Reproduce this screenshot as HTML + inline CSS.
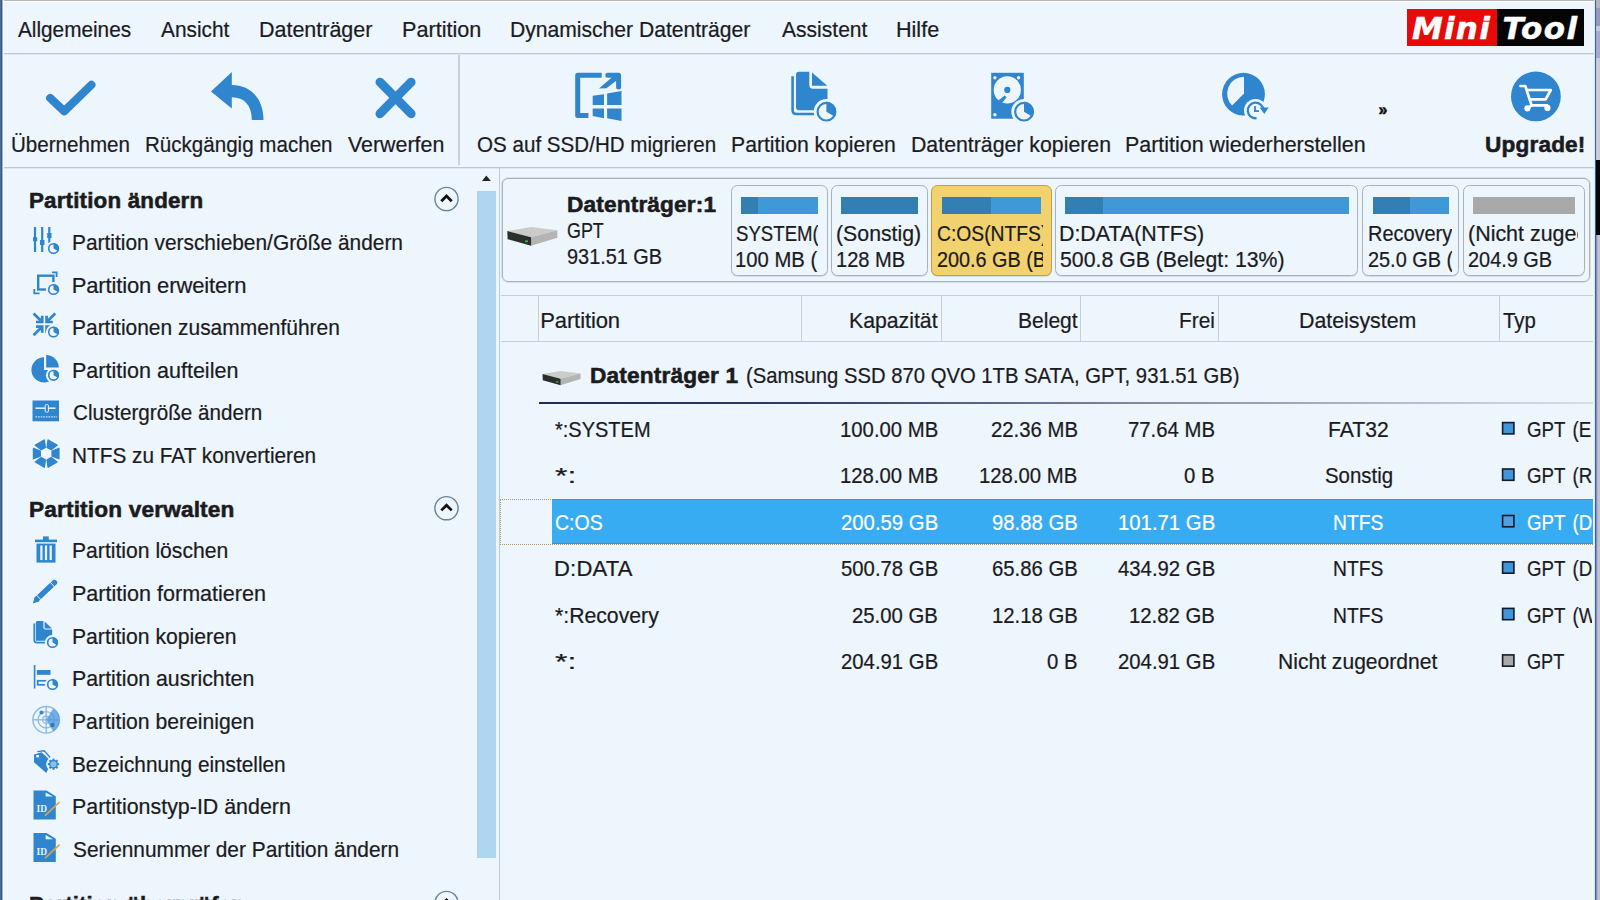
<!DOCTYPE html>
<html lang="de">
<head>
<meta charset="utf-8">
<title>MiniTool Partition Wizard</title>
<style>
html,body{margin:0;padding:0;}
body{width:1600px;height:900px;overflow:hidden;background:#edf5fd;position:relative;
  font-family:"Liberation Sans",sans-serif;font-size:22px;color:#1b1b1d;}
*{box-sizing:border-box;}
.abs{position:absolute;}
.t{position:absolute;white-space:pre;line-height:24px;height:24px;transform-origin:0 50%;-webkit-text-stroke:0.22px currentColor;}
.b{font-weight:bold;-webkit-text-stroke:0.55px currentColor;}
svg{position:absolute;left:0;top:0;overflow:visible;}
/* window chrome */
#edgeT{left:0;top:0;width:1600px;height:3px;background:linear-gradient(#b7b8ba 0 1px,#dfe3e8 1px 1.4px,#fbfdff 1.4px 2.4px,#f3f9fe 2.4px 3px);}
#edgeL{left:0;top:0;width:4px;height:900px;background:linear-gradient(90deg,#566c98 0 1px,#38537d 1px 2px,#9dbacf 2px 3px,#eefcff 3px 4px);}
#edgeR{left:1594px;top:0;width:6px;height:900px;background:linear-gradient(90deg,#d6ecfa 0 1px,#445f7e 1px 2px,#8690b6 2px 3px,#adb3d6 3px 4px,#c1c1d2 4px 6px);}
#edgeRb{left:1596px;top:0;width:4px;height:235px;background:linear-gradient(#b3b4bd 0 8px,#9398c1 8px 26px,#c4c7db 26px 31px,#a6aad0 31px 58px,#c9cbdc 58px 160px,#05070f 160px 235px);}
/* menu + toolbar */
#menu{left:0;top:0;width:1595px;height:54px;border-bottom:1px solid #bcc8d7;box-shadow:0 1px 0 #dfe8f2;}
#tool{left:0;top:54px;width:1595px;height:114px;border-bottom:1px solid #bcc8d7;box-shadow:0 1px 0 #dfe8f2;}
#tsep{left:458.4px;top:1px;width:1.3px;height:110px;background:#c6d2e0;}
#logo{left:1407px;top:8.7px;width:177px;height:37.2px;background:#050505;overflow:hidden;}
#logo i{position:absolute;top:0;height:37.2px;font:italic bold 31px/38.4px "DejaVu Sans","Liberation Sans",sans-serif;color:#fff;-webkit-text-stroke:0.5px #fff;}
#logo .r{left:0;width:90px;background:#e60a0a;}
/* left panel */
#left{left:0;top:168px;width:500px;height:732px;border-right:1.3px solid #c1c9d8;}
#thumb{left:477.3px;top:22.8px;width:18.3px;height:667.3px;background:#afd6f1;}
/* right */
#right{left:500px;top:168px;width:1095px;height:732px;}
#diskbox{left:502px;top:178px;width:1087.6px;height:103.6px;border:1px solid #aab2bf;border-radius:6px;box-shadow:0 0 0 0.5px #c3c9d3;}
.blk{position:absolute;top:185.4px;height:90.6px;border:1px solid #a9b1be;border-radius:6.5px;box-shadow:0 0.6px 0 rgba(150,160,178,.55);}
.blk.sel{background:#f1d26f;border-color:#c39f3e;}
.bar{position:absolute;top:10.8px;height:17.2px;background:#3f99d7;}
.used{height:100%;background:#337fb1;}
.clip{position:absolute;left:0;top:0;height:88px;overflow:hidden;}
#thead{left:500.5px;top:295px;width:1092px;height:47.3px;border-top:1.3px solid #c3cfde;border-bottom:1.3px solid #c3cfde;}
.vs{position:absolute;top:0;width:1.3px;height:45px;background:#c3cfde;}
#uline{left:539px;top:402.3px;width:1054px;height:1.3px;background:linear-gradient(90deg,#1f2a5a 0,#2f3a6a 25%,#8790ae 60%,#d9dfea 100%);}
#selrow{left:551.5px;top:499px;width:1041.5px;height:45.3px;background:#37acf3;border-top:1.2px solid #5e8aa6;border-bottom:1.2px solid #5e8aa6;}
#focus{left:500px;top:498.6px;width:1093px;height:46px;border:1.2px dotted #b8965a;}
#typclip{left:1520px;top:400px;width:72.4px;height:300px;overflow:hidden;word-spacing:2.5px;}
</style>
</head>
<body>
<div id="menu" class="abs">
<span class="t" style="left:17.91px;top:17.50px;transform:scaleX(0.9433)">Allgemeines</span>
<span class="t" style="left:160.91px;top:17.50px;transform:scaleX(0.9483)">Ansicht</span>
<span class="t" style="left:258.99px;top:17.50px;transform:scaleX(0.9762)">Datenträger</span>
<span class="t" style="left:402.23px;top:17.50px;transform:scaleX(0.9829)">Partition</span>
<span class="t" style="left:510.27px;top:17.50px;transform:scaleX(0.9588)">Dynamischer Datenträger</span>
<span class="t" style="left:781.91px;top:17.50px;transform:scaleX(0.9567)">Assistent</span>
<span class="t" style="left:896.48px;top:17.50px;transform:scaleX(0.9804)">Hilfe</span>
<div id="logo" class="abs"><i class="r"><span style="position:absolute;left:5px;letter-spacing:1.2px">Mini</span></i><i style="left:95.5px;letter-spacing:1.4px">Tool</i></div>
</div>
<div id="tool" class="abs">
<span class="t" style="left:10.60px;top:78.50px;transform:scaleX(0.9355)">Übernehmen</span>
<span class="t" style="left:144.55px;top:78.50px;transform:scaleX(0.9349)">Rückgängig machen</span>
<span class="t" style="left:347.87px;top:78.50px;transform:scaleX(0.9721)">Verwerfen</span>
<span class="t" style="left:477.35px;top:78.50px;transform:scaleX(0.9360)">OS auf SSD/HD migrieren</span>
<span class="t" style="left:731.01px;top:78.50px;transform:scaleX(0.9630)">Partition kopieren</span>
<span class="t" style="left:911.00px;top:78.50px;transform:scaleX(0.9677)">Datenträger kopieren</span>
<span class="t" style="left:1125.49px;top:78.50px;transform:scaleX(0.9742)">Partition wiederherstellen</span>
<span class="t b" style="left:1485.14px;top:78.50px;letter-spacing:0.15px;transform:scaleX(1.0283)">Upgrade!</span>
<span class="t b" style="left:1378.5px;top:44px;font-size:16px;color:#111">»</span>
<div id="tsep" class="abs"></div>
</div>
<div id="left" class="abs">
<span class="t b" style="left:29.03px;top:21.00px;letter-spacing:0.15px;transform:scaleX(1.0190)">Partition ändern</span>
<span class="t" style="left:71.78px;top:62.90px;transform:scaleX(0.9497)">Partition verschieben/Größe ändern</span>
<span class="t" style="left:71.70px;top:105.50px;letter-spacing:-0.14px">Partition erweitern</span>
<span class="t" style="left:71.77px;top:148.10px;transform:scaleX(0.9525)">Partitionen zusammenführen</span>
<span class="t" style="left:71.73px;top:190.70px;transform:scaleX(0.9787)">Partition aufteilen</span>
<span class="t" style="left:72.58px;top:233.30px;transform:scaleX(0.9379)">Clustergröße ändern</span>
<span class="t" style="left:71.79px;top:275.90px;transform:scaleX(0.9448)">NTFS zu FAT konvertieren</span>
<span class="t b" style="left:29.02px;top:329.80px;letter-spacing:0.15px;transform:scaleX(1.0293)">Partition verwalten</span>
<span class="t" style="left:71.76px;top:371.30px;transform:scaleX(0.9604)">Partition löschen</span>
<span class="t" style="left:71.73px;top:413.95px;transform:scaleX(0.9792)">Partition formatieren</span>
<span class="t" style="left:71.76px;top:456.60px;transform:scaleX(0.9615)">Partition kopieren</span>
<span class="t" style="left:71.75px;top:499.25px;transform:scaleX(0.9677)">Partition ausrichten</span>
<span class="t" style="left:71.76px;top:541.90px;transform:scaleX(0.9618)">Partition bereinigen</span>
<span class="t" style="left:71.79px;top:584.55px;transform:scaleX(0.9442)">Bezeichnung einstellen</span>
<span class="t" style="left:71.74px;top:627.20px;transform:scaleX(0.9727)">Partitionstyp-ID ändern</span>
<span class="t" style="left:72.57px;top:669.85px;transform:scaleX(0.9491)">Seriennummer der Partition ändern</span>
<span class="t b" style="left:29.05px;top:725.30px;letter-spacing:0.15px;transform:scaleX(1.0063)">Partition überprüfen</span>
<div id="thumb" class="abs"></div>
</div>
<div id="diskbox" class="abs"></div>
<div class="blk" style="left:730.5px;width:97.1px"><div class="bar" style="left:9.3px;width:77.0px"><div class="used" style="width:17.5px"></div></div><div class="clip" style="width:86.5px"><span class="t" style="left:4.29px;top:35.40px;transform:scaleX(0.8468)">SYSTEM(FAT32)</span>
<span class="t" style="left:3.55px;top:61.50px;transform:scaleX(0.9211)">100 MB (Belegt: 22%)</span></div></div>
<div class="blk" style="left:831.0px;width:96.8px"><div class="bar" style="left:9.4px;width:76.6px"><div class="used" style="width:76.6px"></div></div><div class="clip" style="width:90.0px"><span class="t" style="left:4.34px;top:35.40px;transform:scaleX(0.9677)">(Sonstig)</span>
<span class="t" style="left:4.16px;top:61.50px;transform:scaleX(0.9130)">128 MB</span></div></div>
<div class="blk sel" style="left:930.5px;width:121.5px"><div class="bar" style="left:10.5px;width:99.0px"><div class="used" style="width:48.6px"></div></div><div class="clip" style="width:111.2px"><span class="t" style="left:5.07px;top:35.40px;transform:scaleX(0.8771)">C:OS(NTFS)</span>
<span class="t" style="left:5.06px;top:61.50px;transform:scaleX(0.9009)">200.6 GB (Belegt: 49%)</span></div></div>
<div class="blk" style="left:1054.7px;width:303.5px"><div class="bar" style="left:9.5px;width:283.5px"><div class="used" style="width:37.6px"></div></div><div class="clip" style="width:294.3px"><span class="t" style="left:3.80px;top:35.40px;transform:scaleX(0.9715)">D:DATA(NTFS)</span>
<span class="t" style="left:4.63px;top:61.50px;transform:scaleX(0.9667)">500.8 GB (Belegt: 13%)</span></div></div>
<div class="blk" style="left:1362.0px;width:97.0px"><div class="bar" style="left:10.0px;width:76.2px"><div class="used" style="width:37.4px"></div></div><div class="clip" style="width:89.2px"><span class="t" style="left:4.60px;top:35.40px;transform:scaleX(0.9058)">Recovery(NTFS)</span>
<span class="t" style="left:5.36px;top:61.50px;transform:scaleX(0.9041)">25.0 GB (Belegt: 48%)</span></div></div>
<div class="blk" style="left:1462.8px;width:122.5px"><div class="bar" style="left:9.5px;width:101.5px;background:#a9a9a9"></div><div class="clip" style="width:114.2px"><span class="t" style="left:3.83px;top:35.40px;transform:scaleX(0.9748)">(Nicht zugeordnet)</span>
<span class="t" style="left:4.36px;top:61.50px;transform:scaleX(0.9042)">204.9 GB</span></div></div>
<div id="thead" class="abs">
<div class="vs" style="left:37px"></div><div class="vs" style="left:300.6px"></div><div class="vs" style="left:440.6px"></div><div class="vs" style="left:579.7px"></div><div class="vs" style="left:717px"></div><div class="vs" style="left:998px"></div>
</div>
<div id="uline" class="abs"></div>
<div id="focus" class="abs"></div>
<div id="selrow" class="abs"></div>
<div id="rtext" class="abs" style="left:0;top:0">
<span class="t b" style="left:566.52px;top:192.90px;letter-spacing:0.15px;transform:scaleX(1.0295)">Datenträger:1</span>
<span class="t" style="left:566.92px;top:219.00px;transform:scaleX(0.8135)">GPT</span>
<span class="t" style="left:566.87px;top:245.30px;transform:scaleX(0.9042)">931.51 GB</span>
<span class="t" style="left:540.20px;top:308.50px;letter-spacing:-0.10px">Partition</span>
<span class="t" style="left:849.00px;top:308.50px;transform:scaleX(0.9654)">Kapazität</span>
<span class="t" style="left:1017.52px;top:308.50px;transform:scaleX(0.9562)">Belegt</span>
<span class="t" style="left:1178.79px;top:308.50px;transform:scaleX(0.9458)">Frei</span>
<span class="t" style="left:1299.25px;top:308.50px;transform:scaleX(0.9695)">Dateisystem</span>
<span class="t" style="left:1502.71px;top:308.50px;transform:scaleX(0.9269)">Typ</span>
<span class="t b" style="left:590.02px;top:363.80px;letter-spacing:0.15px;transform:scaleX(1.0304)">Datenträger 1</span>
<span class="t" style="left:745.65px;top:363.80px;transform:scaleX(0.9207)">(Samsung SSD 870 QVO 1TB SATA, GPT, 931.51 GB)</span>
<span class="t" style="left:555.18px;top:417.70px;transform:scaleX(0.9091)">*:SYSTEM</span>
<span class="t" style="left:840.04px;top:417.70px;transform:scaleX(0.9240)">100.00 MB</span>
<span class="t" style="left:990.72px;top:417.70px;transform:scaleX(0.9240)">22.36 MB</span>
<span class="t" style="left:1127.72px;top:417.70px;transform:scaleX(0.9240)">77.64 MB</span>
<span class="t" style="left:1327.86px;top:417.70px;transform:scaleX(0.9602)">FAT32</span>
<span class="t" style="left:554.92px;top:464.15px;transform:scaleX(1.4492)">*:</span>
<span class="t" style="left:840.04px;top:464.15px;transform:scaleX(0.9240)">128.00 MB</span>
<span class="t" style="left:979.44px;top:464.15px;transform:scaleX(0.9240)">128.00 MB</span>
<span class="t" style="left:1184.17px;top:464.15px;transform:scaleX(0.9240)">0 B</span>
<span class="t" style="left:1324.68px;top:464.15px;transform:scaleX(0.9276)">Sonstig</span>
<span class="t" style="left:554.97px;top:510.60px;transform:scaleX(0.8889);color:#ffffff">C:OS</span>
<span class="t" style="left:841.16px;top:510.60px;transform:scaleX(0.9240);color:#ffffff">200.59 GB</span>
<span class="t" style="left:991.73px;top:510.60px;transform:scaleX(0.9240);color:#ffffff">98.88 GB</span>
<span class="t" style="left:1117.56px;top:510.60px;transform:scaleX(0.9240);color:#ffffff">101.71 GB</span>
<span class="t" style="left:1333.09px;top:510.60px;transform:scaleX(0.8759);color:#ffffff">NTFS</span>
<span class="t" style="left:554.05px;top:557.05px;letter-spacing:0.17px">D:DATA</span>
<span class="t" style="left:841.16px;top:557.05px;transform:scaleX(0.9240)">500.78 GB</span>
<span class="t" style="left:991.73px;top:557.05px;transform:scaleX(0.9240)">65.86 GB</span>
<span class="t" style="left:1117.56px;top:557.05px;transform:scaleX(0.9240)">434.92 GB</span>
<span class="t" style="left:1333.09px;top:557.05px;transform:scaleX(0.8759)">NTFS</span>
<span class="t" style="left:555.15px;top:603.50px;transform:scaleX(0.9642)">*:Recovery</span>
<span class="t" style="left:852.33px;top:603.50px;transform:scaleX(0.9240)">25.00 GB</span>
<span class="t" style="left:991.73px;top:603.50px;transform:scaleX(0.9240)">12.18 GB</span>
<span class="t" style="left:1128.73px;top:603.50px;transform:scaleX(0.9240)">12.82 GB</span>
<span class="t" style="left:1333.09px;top:603.50px;transform:scaleX(0.8759)">NTFS</span>
<span class="t" style="left:554.92px;top:649.95px;transform:scaleX(1.4492)">*:</span>
<span class="t" style="left:841.16px;top:649.95px;transform:scaleX(0.9240)">204.91 GB</span>
<span class="t" style="left:1047.17px;top:649.95px;transform:scaleX(0.9240)">0 B</span>
<span class="t" style="left:1117.56px;top:649.95px;transform:scaleX(0.9240)">204.91 GB</span>
<span class="t" style="left:1278.12px;top:649.95px;transform:scaleX(0.9580)">Nicht zugeordnet</span>
</div>
<div id="typclip" class="abs">
<span class="t" style="left:6.99px;top:17.70px;transform:scaleX(0.8500)">GPT (EFI-Systempartition)</span>
<span class="t" style="left:6.99px;top:64.15px;transform:scaleX(0.8500)">GPT (Reservierte Partition)</span>
<span class="t" style="left:6.99px;top:110.60px;transform:scaleX(0.8500);color:#ffffff">GPT (Datenpartition)</span>
<span class="t" style="left:6.99px;top:157.05px;transform:scaleX(0.8500)">GPT (Datenpartition)</span>
<span class="t" style="left:6.99px;top:203.50px;transform:scaleX(0.8500)">GPT (Wiederherstellungspartition)</span>
<span class="t" style="left:7.01px;top:249.95px;transform:scaleX(0.8250)">GPT</span>
</div>
<svg width="1600" height="900" viewBox="0 0 1600 900">
<g id="ico-apply"><polyline points="50.2,98.1 64.2,111.3 91.4,84.9" fill="none" stroke="#3085cf" stroke-width="8.2" stroke-linecap="round" stroke-linejoin="round"/></g>
<g id="ico-undo"><path d="M211,91.5 L231.8,72 V84.9 C250.5,84.9 263.5,98.5 263.5,119.9 H251.8 C251.8,105.5 244.5,97.3 231.8,97.3 V108.6 Z" fill="#3085cf"/></g>
<g id="ico-discard" stroke="#3085cf" stroke-width="9" stroke-linecap="round"><line x1="380" y1="82.2" x2="411.1" y2="113.7"/><line x1="411.1" y1="82.2" x2="380" y2="113.7"/></g>
<g id="ico-migrate"><path d="M601.7,75.3 H577.7 V115.4 H588.4" fill="none" stroke="#3085cf" stroke-width="5" stroke-linejoin="round"/><polyline points="607.8,75.3 618.6,75.3 618.6,87" fill="none" stroke="#3085cf" stroke-width="5" stroke-linejoin="round" stroke-linecap="round"/><polygon points="599,88.6 606.5,88.3 619.5,78.2 615.2,74.6" fill="#3085cf"/><polygon points="592.7,95.8 604,94.2 604,105.1 592.7,105.1" fill="#3085cf"/><polygon points="607.1,93.4 621.5,91.1 621.5,105.1 607.1,105.1" fill="#3085cf"/><polygon points="592.7,108.6 604,108.6 604,118.3 592.7,116" fill="#3085cf"/><polygon points="607.1,108.6 621.5,108.6 621.5,121 607.1,118.3" fill="#3085cf"/></g>
<g id="ico-copypart"><path d="M792.6,76.3 V110.2 Q792.6,114 796.4,114 H814.5" fill="none" stroke="#3085cf" stroke-width="2.6"/><path d="M799,71.7 H809.3 V85 Q809.3,88.8 813.1,88.8 H827.5 V107.2 Q827.5,110.2 824.5,110.2 H799 Q796,110.2 796,107.2 V74.7 Q796,71.7 799,71.7 Z" fill="#3085cf"/><path d="M812,72.6 L827.3,85.8 H812 Z" fill="#3085cf"/><circle cx="826.4" cy="111.7" r="12.7" fill="#edf5fd"/><circle cx="826.4" cy="111.7" r="8.8" fill="none" stroke="#3085cf" stroke-width="2.2"/><path d="M826.4,111.7 V101.8 A9.9,9.9 0 0 1 834.97,116.65 Z" fill="#3085cf"/></g>
<g id="ico-copydisk"><rect x="991.2" y="72.8" width="32.6" height="45.9" fill="#3085cf"/><circle cx="1007.3" cy="89.9" r="13.6" fill="#edf5fd"/><circle cx="1007.3" cy="89.9" r="3.1" fill="#3085cf"/><polygon points="998.2,100.6 1001.6,103.6 1006.6,97.2 1004.8,95.6" fill="#3085cf"/><circle cx="994.9" cy="77.7" r="1.7" fill="#edf5fd"/><circle cx="1018.6" cy="77.7" r="1.7" fill="#edf5fd"/><circle cx="994.9" cy="114.7" r="1.7" fill="#edf5fd"/><circle cx="1024" cy="111.7" r="12.7" fill="#edf5fd"/><circle cx="1024" cy="111.7" r="8.8" fill="none" stroke="#3085cf" stroke-width="2.2"/><path d="M1024,111.7 V101.8 A9.9,9.9 0 0 1 1032.57,116.65 Z" fill="#3085cf"/></g>
<g id="ico-recover"><circle cx="1243.5" cy="94.2" r="21.4" fill="#3085cf"/><path d="M1244,93.6 V76.8 A16.8,16.8 0 0 0 1232.1,105.5 Z" fill="#edf5fd"/><circle cx="1255.6" cy="110.5" r="11.6" fill="#edf5fd"/><path d="M1256.6,118.2 A7.8,7.8 0 1 1 1263.4,110" fill="none" stroke="#3085cf" stroke-width="2.3"/><polygon points="1259.6,107.6 1268.6,107.6 1264.3,114" fill="#3085cf"/><path d="M1255,106 V111.2 H1259" fill="none" stroke="#3085cf" stroke-width="1.8"/></g>
<g id="ico-upgrade"><circle cx="1535.9" cy="96.4" r="24.9" fill="#3085cf"/><g fill="none" stroke="#fff" stroke-width="2.7" stroke-linecap="round" stroke-linejoin="round"><path d="M1520.5,86 H1525.3 L1531.6,105.4 H1547"/><path d="M1527.6,90 H1550.8 L1545.6,99.3 H1530.6"/><path d="M1531.6,105.4 L1528,107.8"/></g><circle cx="1527.4" cy="108.3" r="3.1" fill="#fff"/><circle cx="1547.4" cy="107.9" r="3.1" fill="#fff"/></g>
<g id="collapse"><circle cx="446.5" cy="199" r="11.6" fill="none" stroke="#6a8396" stroke-width="1.4"/><polyline points="441.3,201.2 446.5,196 451.7,201.2" fill="none" stroke="#111" stroke-width="2.7"/><circle cx="446.5" cy="508.2" r="11.6" fill="none" stroke="#6a8396" stroke-width="1.4"/><polyline points="441.3,510.4 446.5,505.2 451.7,510.4" fill="none" stroke="#111" stroke-width="2.7"/><circle cx="446.5" cy="903" r="11.6" fill="none" stroke="#6a8396" stroke-width="1.4"/><polyline points="441.3,905.2 446.5,900 451.7,905.2" fill="none" stroke="#111" stroke-width="2.7"/></g>
<polygon points="486.3,175.6 482,181 490.8,181" fill="#222"/>
<g id="li-move" stroke="#3085cf" stroke-width="2.2"><line x1="35" y1="227" x2="35" y2="252"/><line x1="42.2" y1="227" x2="42.2" y2="252"/><line x1="49.3" y1="227" x2="49.3" y2="244"/></g><rect x="33" y="237.2" width="4.2" height="4" fill="#3085cf"/><rect x="40" y="240" width="4.5" height="5" fill="#3085cf"/><rect x="47.2" y="233" width="4.3" height="5" fill="#3085cf"/><circle cx="53.5" cy="248.5" r="7.6" fill="#edf5fd"/><circle cx="53.5" cy="248.5" r="4.8" fill="none" stroke="#3085cf" stroke-width="1.6"/><path d="M53.5,248.5 L53.5,242.9 A5.6,5.6 0 0 1 58.35,251.30 Z" fill="#3085cf"/>
<g id="li-extend" fill="none" stroke="#3085cf" stroke-width="2.4"><rect x="38.2" y="275.7" width="15.2" height="13.8"/><polyline points="52,272.3 56.6,272.3 56.6,277" stroke-width="1.8"/><polyline points="34.3,289 34.3,293.3 39.5,293.3" stroke-width="1.8"/></g><circle cx="53.5" cy="289.5" r="7.6" fill="#edf5fd"/><circle cx="53.5" cy="289.5" r="4.8" fill="none" stroke="#3085cf" stroke-width="1.6"/><path d="M53.5,289.5 L53.5,283.9 A5.6,5.6 0 0 1 58.35,292.30 Z" fill="#3085cf"/>
<g id="li-merge" fill="none" stroke="#3085cf" stroke-width="2.7"><line x1="33.6" y1="313.5" x2="41.2" y2="321.0"/><polyline points="36.0,322.0 42.2,322.0 42.2,315.8"/><line x1="55.2" y1="313.5" x2="47.6" y2="321.0"/><polyline points="52.8,322.0 46.6,322.0 46.6,315.8"/><line x1="33.6" y1="335.2" x2="41.2" y2="327.6"/><polyline points="36.0,326.6 42.2,326.6 42.2,332.8"/><line x1="55.2" y1="335.2" x2="47.6" y2="327.6"/><polyline points="52.8,326.6 46.6,326.6 46.6,332.8"/></g><circle cx="53.5" cy="332" r="7.6" fill="#edf5fd"/><circle cx="53.5" cy="332" r="4.8" fill="none" stroke="#3085cf" stroke-width="1.6"/><path d="M53.5,332 L53.5,326.4 A5.6,5.6 0 0 1 58.35,334.80 Z" fill="#3085cf"/>
<g id="li-split"><path d="M44,370 V357.3 A12.6,12.6 0 1 0 56.6,370 Z" fill="#3085cf"/><path d="M46.2,367.6 V355 A12.6,12.6 0 0 1 58.8,367.6 Z" fill="#3085cf"/></g><circle cx="53.5" cy="375.3" r="7.6" fill="#edf5fd"/><circle cx="53.5" cy="375.3" r="4.8" fill="none" stroke="#3085cf" stroke-width="1.6"/><path d="M53.5,375.3 L53.5,369.7 A5.6,5.6 0 0 1 58.35,378.10 Z" fill="#3085cf"/>
<g id="li-cluster"><rect x="32.5" y="400.5" width="26.5" height="20.8" fill="#3085cf"/><line x1="35.5" y1="408.2" x2="55.5" y2="408.2" stroke="#dcecfa" stroke-width="1.6"/><rect x="45.2" y="404.6" width="3.2" height="7.6" rx="1" fill="#3085cf" stroke="#e9f3fc" stroke-width="1"/><line x1="35.5" y1="416.8" x2="57" y2="416.8" stroke="#cfe3f6" stroke-width="1.2" stroke-dasharray="1.6 1"/></g>
<g id="li-convert"><polygon points="48.1,440.0 57.0,445.2 51.2,449.7 47.1,447.3" fill="#3085cf" stroke="#3085cf" stroke-width="1.4" stroke-linejoin="round"/><polygon points="58.9,448.5 58.9,458.7 52.1,456.0 52.1,451.2" fill="#3085cf" stroke="#3085cf" stroke-width="1.4" stroke-linejoin="round"/><polygon points="57.0,462.0 48.1,467.2 47.1,459.9 51.2,457.5" fill="#3085cf" stroke="#3085cf" stroke-width="1.4" stroke-linejoin="round"/><polygon points="44.3,467.2 35.4,462.0 41.2,457.5 45.3,459.9" fill="#3085cf" stroke="#3085cf" stroke-width="1.4" stroke-linejoin="round"/><polygon points="33.5,458.7 33.5,448.5 40.3,451.2 40.3,456.0" fill="#3085cf" stroke="#3085cf" stroke-width="1.4" stroke-linejoin="round"/><polygon points="35.4,445.2 44.3,440.0 45.3,447.3 41.2,449.7" fill="#3085cf" stroke="#3085cf" stroke-width="1.4" stroke-linejoin="round"/></g>
<g id="li-delete"><rect x="35" y="539.6" width="22" height="2.6" fill="#3085cf"/><rect x="43" y="536.4" width="5.8" height="4" fill="#3085cf"/><rect x="36.5" y="543.6" width="19" height="19" fill="#3085cf"/><rect x="40.3" y="545.5" width="2.2" height="14.6" fill="#edf5fd"/><rect x="44.9" y="545.5" width="2.2" height="14.6" fill="#edf5fd"/><rect x="49.6" y="545.5" width="2.2" height="14.6" fill="#edf5fd"/></g>
<g id="li-format"><line x1="37" y1="599" x2="54.5" y2="582.5" stroke="#3085cf" stroke-width="5.4" stroke-linecap="round"/><polygon points="32.8,603.4 35,596.5 39.6,601.2" fill="#3085cf"/><line x1="49.3" y1="581.3" x2="54.6" y2="587" stroke="#edf5fd" stroke-width="1"/><line x1="36.2" y1="594.6" x2="41" y2="599.8" stroke="#edf5fd" stroke-width="0.9"/></g>
<g id="li-copy"><path d="M34.2,623.5 V640 Q34.2,642.6 36.8,642.6 H47" fill="none" stroke="#3085cf" stroke-width="1.6"/><path d="M37.3,621 H43.4 V627.5 Q43.4,629.6 45.5,629.6 H52.2 V640.8 H35.8 V622.5 Q35.8,621 37.3,621 Z" fill="#3085cf"/><path d="M44.6,621.6 L52,628.6 H44.6 Z" fill="#3085cf"/></g><circle cx="52.5" cy="642.5" r="7.6" fill="#edf5fd"/><circle cx="52.5" cy="642.5" r="4.8" fill="none" stroke="#3085cf" stroke-width="1.6"/><path d="M52.5,642.5 L52.5,636.9 A5.6,5.6 0 0 1 57.35,645.30 Z" fill="#3085cf"/>
<g id="li-align"><rect x="33.8" y="665" width="1.6" height="23.5" fill="#3085cf"/><rect x="36.8" y="670" width="13.7" height="4.8" fill="#3085cf"/><rect x="37.7" y="680.8" width="12" height="4" fill="none" stroke="#3085cf" stroke-width="1.7"/></g><circle cx="52.5" cy="684.5" r="7.6" fill="#edf5fd"/><circle cx="52.5" cy="684.5" r="4.8" fill="none" stroke="#3085cf" stroke-width="1.6"/><path d="M52.5,684.5 L52.5,678.9 A5.6,5.6 0 0 1 57.35,687.30 Z" fill="#3085cf"/>
<g id="li-wipe" fill="none" stroke="#8fbce6" stroke-width="1.4"><circle cx="46.2" cy="719.8" r="13.3"/><circle cx="46.2" cy="719.8" r="8.2"/><circle cx="46.2" cy="719.8" r="3.6"/><line x1="32.9" y1="719.8" x2="59.5" y2="719.8"/><line x1="46.2" y1="706.5" x2="46.2" y2="733.1"/></g><path d="M46.2,719.8 L53.2,708.4 A13.3,13.3 0 0 1 53.2,731.2 Z" fill="#4a96dc" fill-opacity="0.75"/><circle cx="41.5" cy="712.5" r="2" fill="#3d86cc"/><circle cx="52.5" cy="725" r="2.2" fill="#2f78c0"/>
<g id="li-label"><path d="M37.3,751.6 L44.2,750.8 L50.2,757.5" fill="none" stroke="#3085cf" stroke-width="1.3"/><path d="M34,754.6 L41.6,752.3 L51.5,761.6 L46.3,773 L34,762.3 Z" fill="#3085cf"/><rect x="36.2" y="755" width="2.8" height="2.4" fill="#edf5fd"/><circle cx="53.5" cy="764.2" r="7.3" fill="#edf5fd"/><g stroke="#3085cf" stroke-width="2"><line x1="56.9" y1="764.2" x2="59.1" y2="764.2"/><line x1="55.9" y1="766.6" x2="57.5" y2="768.2"/><line x1="53.5" y1="767.6" x2="53.5" y2="769.8"/><line x1="51.1" y1="766.6" x2="49.5" y2="768.2"/><line x1="50.1" y1="764.2" x2="47.9" y2="764.2"/><line x1="51.1" y1="761.8" x2="49.5" y2="760.2"/><line x1="53.5" y1="760.8" x2="53.5" y2="758.6"/><line x1="55.9" y1="761.8" x2="57.5" y2="760.2"/></g><circle cx="53.5" cy="764.2" r="3.7" fill="#8fc0ec" stroke="#3085cf" stroke-width="1.3"/></g>
<g id="li-typeid"><path d="M33.5,790.5 H46.5 L55.8,796.2 V819.5 H33.5 Z" fill="#3085cf"/><path d="M45.6,792.4 L53,796.6 H45.6 Z" fill="#e6f1fb"/><text x="36.6" y="812.3" font-family="Liberation Serif, serif" font-weight="bold" font-size="10.5" fill="#e6f1fb" textLength="10.5" lengthAdjust="spacingAndGlyphs">ID</text><line x1="45" y1="815.6" x2="59.6" y2="802" stroke="#d9a650" stroke-width="1.7"/></g>
<g id="li-serial"><path d="M33.5,833.1 H46.5 L55.8,838.8000000000001 V862.1 H33.5 Z" fill="#3085cf"/><path d="M45.6,835.0 L53,839.2 H45.6 Z" fill="#e6f1fb"/><text x="36.6" y="854.9" font-family="Liberation Serif, serif" font-weight="bold" font-size="10.5" fill="#e6f1fb" textLength="10.5" lengthAdjust="spacingAndGlyphs">ID</text><line x1="45" y1="858.2" x2="59.6" y2="844.6" stroke="#d9a650" stroke-width="1.7"/></g>
<g id="disk-a"><polygon points="507.3,231.0 531.1,227.0 557.3,230.3 531.1,237.2" fill="#cbcbcb"/><polygon points="531.1,237.2 557.3,230.3 557.3,237.7 531.1,245.7" fill="#b4b4b4"/><polygon points="507.3,231.0 531.1,237.2 531.1,245.7 507.6,239.2" fill="#2b2f2b"/><rect x="525.0" y="240.5" width="3.0" height="1.6" fill="#3fbe4e"/></g>
<g id="disk-b"><polygon points="542.5,374.0 560.6,371.0 580.5,373.5 560.6,378.8" fill="#cbcbcb"/><polygon points="560.6,378.8 580.5,373.5 580.5,379.1 560.6,385.2" fill="#b4b4b4"/><polygon points="542.5,374.0 560.6,378.8 560.6,385.2 542.8,380.3" fill="#2b2f2b"/><rect x="556.0" y="381.3" width="2.3" height="1.2" fill="#3fbe4e"/></g>
<rect x="1502.6" y="422.6" width="11.3" height="11.3" fill="#3f96dc" stroke="#141a2a" stroke-width="1.6"/>
<rect x="1502.6" y="469.0" width="11.3" height="11.3" fill="#3f96dc" stroke="#141a2a" stroke-width="1.6"/>
<rect x="1502.6" y="515.5" width="11.3" height="11.3" fill="#4f9fe2" stroke="#141a2a" stroke-width="1.6"/>
<rect x="1502.6" y="561.9" width="11.3" height="11.3" fill="#3f96dc" stroke="#141a2a" stroke-width="1.6"/>
<rect x="1502.6" y="608.4" width="11.3" height="11.3" fill="#3f96dc" stroke="#141a2a" stroke-width="1.6"/>
<rect x="1502.6" y="654.9" width="11.3" height="11.3" fill="#a9a9a9" stroke="#141a2a" stroke-width="1.6"/>
</svg>
<div id="edgeT" class="abs"></div>
<div id="edgeL" class="abs"></div>
<div id="edgeR" class="abs"></div>
<div id="edgeRb" class="abs"></div>
</body>
</html>
